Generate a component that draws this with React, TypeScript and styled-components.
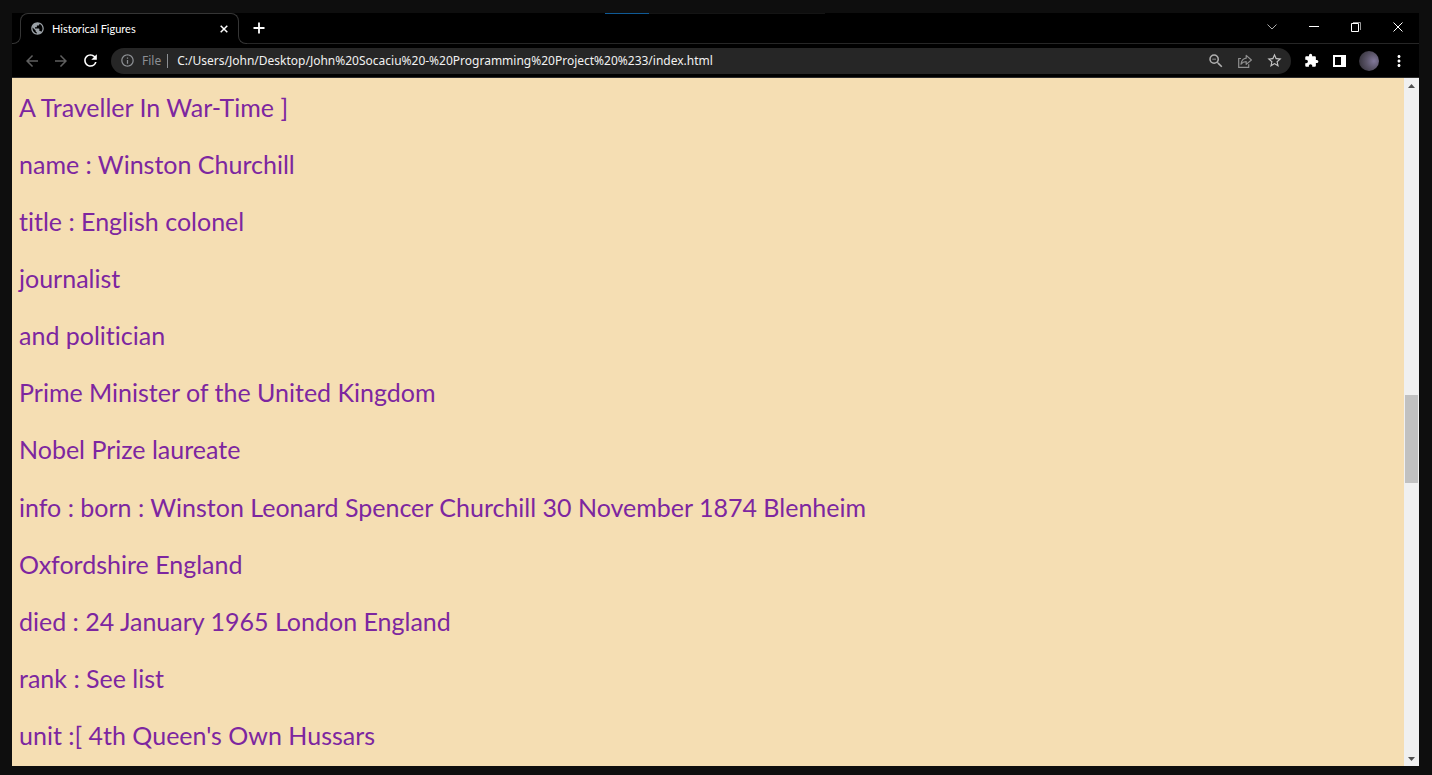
import React from "react";
import styled, { createGlobalStyle } from "styled-components";
import {
  MdArrowBack,
  MdArrowForward,
  MdExtension,
  MdInfoOutline,
  MdMoreVert,
  MdPublic,
  MdRefresh,
  MdStarBorder,
  MdZoomOut,
} from "react-icons/md";

const GlobalStyle = createGlobalStyle`
  *, *::before, *::after { box-sizing: border-box; }
  body { margin: 0; background: #0e0e0e; }
  button { padding: 0; border: 0; background: none; font: inherit; color: inherit; }
`;

const uiFont = `"Noto Sans", "Open Sans", sans-serif`;

const Desktop = styled.div`
  display: flex;
  min-height: 100vh;
  padding: 13px 13px 9px 12px;
  background: #0e0e0e;
`;

const BrowserWindow = styled.div`
  flex: 1;
  min-width: 0;
  display: flex;
  flex-direction: column;
  position: relative;
  background: #000;
  color: #fff;
  font-family: ${uiFont};
`;

const SnapHint = styled.div`
  position: absolute;
  top: 0;
  left: 593px;
  width: 220px;
  height: 1px;
  background: linear-gradient(to right, #0f5a96 20%, #141414 20%);
`;

const TitleBar = styled.header`
  display: flex;
  height: 31px;
`;

const Flare = styled.div<{ $side: "left" | "right" }>`
  align-self: flex-end;
  flex: none;
  width: 9px;
  height: 9px;
  border: 0 solid #353535;
  border-bottom-width: 1px;
  ${(p) =>
    p.$side === "left"
      ? "border-right-width: 1px; border-bottom-right-radius: 8px; margin-right: -1px;"
      : "border-left-width: 1px; border-bottom-left-radius: 8px; margin-left: -1px;"}
`;

const Tab = styled.div`
  flex: none;
  width: 219px;
  height: 23px;
  border: 1px solid #353535;
  border-bottom: 0;
  border-radius: 8px 8px 0 0;
`;

const TabContent = styled.div`
  display: flex;
  align-items: center;
  gap: 7px;
  height: 29px;
  padding: 0 8px 0 9px;
`;

const TabTitle = styled.span`
  flex: 1;
  font-family: Lato, sans-serif;
  font-size: 11px;
  line-height: 16px;
  white-space: nowrap;
`;

const IconButton = styled.button<{ $size?: number; $tone?: string }>`
  display: flex;
  align-items: center;
  justify-content: center;
  flex: none;
  width: ${(p) => p.$size ?? 16}px;
  height: ${(p) => p.$size ?? 16}px;
  color: ${(p) => p.$tone ?? "#fff"};

  svg { flex: none; }
`;

const Strip = styled.div`
  flex: 1;
  display: flex;
  align-items: center;
  justify-content: space-between;
  padding: 0 13px 2px 4px;
  border-bottom: 1px solid #262626;
`;

const WindowControls = styled.div`
  display: flex;
  gap: 26px;
`;

const Toolbar = styled.nav`
  display: flex;
  align-items: center;
  height: 34px;
  padding: 0 12px;
  border-bottom: 1px solid #2b2b2b;
`;

const NavButtons = styled.div`
  display: flex;
  gap: 13px;
  margin-right: 13px;
`;

const AddressBar = styled.div`
  flex: 1;
  display: flex;
  align-items: center;
  height: 26px;
  padding: 0 9px;
  border-radius: 13px;
  background: #262626;
`;

const Scheme = styled.label`
  display: flex;
  align-items: center;
  gap: 7px;
  color: #8c8f93;
  font-size: 12px;
  line-height: 16px;
`;

const Divider = styled.span`
  width: 1px;
  height: 14px;
  margin: 0 9px 0 6px;
  background: #8c8f93;
`;

const Address = styled.input`
  flex: 1;
  min-width: 0;
  padding: 0;
  border: 0;
  outline: 0;
  background: none;
  color: #f1f1f1;
  font-family: ${uiFont};
  font-size: 12px;
  line-height: 16px;
`;

const AddressActions = styled.div`
  display: flex;
  gap: 13px;
`;

const ToolbarActions = styled.div`
  display: flex;
  align-items: center;
  gap: 12px;
  margin-left: 12px;
`;

const Avatar = styled.button`
  width: 20px;
  height: 20px;
  border-radius: 50%;
  background: radial-gradient(circle at 75% 50%, #81789a 0%, #5c566a 40%, #2b292e 100%);
`;

const Viewport = styled.div`
  flex: 1;
  display: flex;
  background: #f5deb3;
`;

const Facts = styled.main`
  flex: 1;
  display: flex;
  flex-direction: column;
  justify-content: space-between;
  padding: 13px 7px 15px;
`;

const Fact = styled.p`
  margin: 0;
  color: #7d26a0;
  font-family: Lato, "Open Sans", sans-serif;
  font-size: 25px;
  font-variant-ligatures: none;
  line-height: 32px;
`;

const Scrollbar = styled.div`
  display: flex;
  flex-direction: column;
  align-items: center;
  width: 15px;
  background: #f0f0f0;
`;

const ScrollArrow = styled.button`
  display: flex;
  align-items: center;
  justify-content: center;
  width: 15px;
  height: 15px;
`;

const Track = styled.div`
  flex: 1;
  display: flex;
  flex-direction: column;
  width: 13px;
`;

const TrackSpace = styled.div<{ $grow: number }>`
  flex: ${(p) => p.$grow};
`;

const Thumb = styled.div`
  height: 88px;
  background: #c1c1c1;
`;

const facts = [
  "A Traveller In War-Time ]",
  "name : Winston Churchill",
  "title : English colonel",
  "journalist",
  "and politician",
  "Prime Minister of the United Kingdom",
  "Nobel Prize laureate",
  "info : born : Winston Leonard Spencer Churchill 30 November 1874 Blenheim",
  "Oxfordshire England",
  "died : 24 January 1965 London England",
  "rank : See list",
  "unit :[ 4th Queen's Own Hussars",
];

const ShareIcon = () => (
  <svg width="16" height="16" viewBox="0 0 16 16" fill="none" stroke="#8f8f8f" strokeWidth="1.2">
    <path d="M4 5.5H1.7v8.8h10v-3" />
    <path d="M9.2 5.2V2.4L14.4 7l-5.2 4.4V8.7c-2.4 0-4 .8-5.2 2.5.4-3.2 2-5.6 5.2-6z" strokeLinejoin="round" />
  </svg>
);

const SidePanelIcon = () => (
  <svg width="16" height="16" viewBox="0 0 16 16">
    <path fill="#fff" d="M2 2h13v12H2zM4 4v8h6V4z" fillRule="evenodd" />
  </svg>
);

export default function App() {
  return (
    <>
      <GlobalStyle />
      <Desktop>
        <BrowserWindow>
          <TitleBar>
            <Flare $side="left" />
            <Tab>
              <TabContent>
                <MdPublic size={15} color="#9aa0a6" />
                <TabTitle>Historical Figures</TabTitle>
                <IconButton $size={12} aria-label="Close tab">
                  <svg width="12" height="12" viewBox="0 0 12 12" stroke="#fff" strokeWidth="1.5">
                    <path d="M2.7 2.7l6.6 6.6M9.3 2.7L2.7 9.3" />
                  </svg>
                </IconButton>
              </TabContent>
            </Tab>
            <Flare $side="right" />
            <Strip>
              <IconButton aria-label="New tab">
                <svg width="16" height="16" viewBox="0 0 16 16" stroke="#fff" strokeWidth="1.8">
                  <path d="M8 3.5v11M2.5 9h11" />
                </svg>
              </IconButton>
              <WindowControls>
                <IconButton aria-label="Search tabs">
                  <svg width="16" height="16" viewBox="0 0 16 16" fill="none" stroke="#aaa">
                    <path d="M3.5 5.5L8 10l4.5-4.5" />
                  </svg>
                </IconButton>
                <IconButton aria-label="Minimize">
                  <svg width="16" height="16" viewBox="0 0 16 16" stroke="#fff">
                    <path d="M3 7.5h10" />
                  </svg>
                </IconButton>
                <IconButton aria-label="Restore">
                  <svg width="16" height="16" viewBox="0 0 16 16" fill="none" stroke="#fff">
                    <path d="M3.5 4.5h7v8h-7z" />
                    <path d="M5 3.5h7.5V11" stroke="#999" />
                  </svg>
                </IconButton>
                <IconButton aria-label="Close">
                  <svg width="16" height="16" viewBox="0 0 16 16" stroke="#fff">
                    <path d="M3.5 3.5l9 9M12.5 3.5l-9 9" />
                  </svg>
                </IconButton>
              </WindowControls>
            </Strip>
          </TitleBar>
          <Toolbar>
            <NavButtons>
              <IconButton aria-label="Back" $tone="#5f5f5f">
                <MdArrowBack size={18} />
              </IconButton>
              <IconButton aria-label="Forward" $tone="#5f5f5f">
                <MdArrowForward size={18} />
              </IconButton>
              <IconButton aria-label="Reload">
                <MdRefresh size={19} />
              </IconButton>
            </NavButtons>
            <AddressBar>
              <Scheme htmlFor="address">
                <MdInfoOutline size={15} />
                File
              </Scheme>
              <Divider />
              <Address
                id="address"
                defaultValue="C:/Users/John/Desktop/John%20Socaciu%20-%20Programming%20Project%20%233/index.html"
              />
              <AddressActions>
                <IconButton aria-label="Zoom" $tone="#b0b0b0">
                  <MdZoomOut size={18} />
                </IconButton>
                <IconButton aria-label="Share">
                  <ShareIcon />
                </IconButton>
                <IconButton aria-label="Bookmark" $tone="#c4c4c4">
                  <MdStarBorder size={17} />
                </IconButton>
              </AddressActions>
            </AddressBar>
            <ToolbarActions>
              <IconButton aria-label="Extensions">
                <MdExtension size={15} />
              </IconButton>
              <IconButton aria-label="Side panel">
                <SidePanelIcon />
              </IconButton>
              <Avatar aria-label="Profile" />
              <IconButton aria-label="Menu">
                <MdMoreVert size={18} />
              </IconButton>
            </ToolbarActions>
          </Toolbar>
          <Viewport>
            <Facts>
              {facts.map((fact) => (
                <Fact key={fact}>{fact}</Fact>
              ))}
            </Facts>
            <Scrollbar>
              <ScrollArrow aria-label="Scroll up">
                <svg width="7" height="4" viewBox="0 0 7 4">
                  <path d="M0 4L3.5 0 7 4z" fill="#505050" />
                </svg>
              </ScrollArrow>
              <Track>
                <TrackSpace $grow={302} />
                <Thumb />
                <TrackSpace $grow={268} />
              </Track>
              <ScrollArrow aria-label="Scroll down">
                <svg width="7" height="4" viewBox="0 0 7 4">
                  <path d="M0 0h7L3.5 4z" fill="#505050" />
                </svg>
              </ScrollArrow>
            </Scrollbar>
          </Viewport>
          <SnapHint />
        </BrowserWindow>
      </Desktop>
    </>
  );
}
